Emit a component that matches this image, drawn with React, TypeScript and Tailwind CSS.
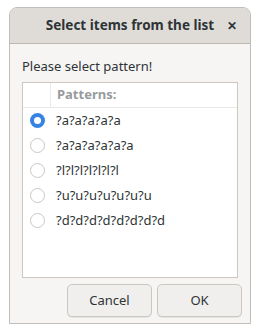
import React, { useState } from "react";

const patterns = ["?a?a?a?a?a", "?a?a?a?a?a?a", "?l?l?l?l?l?l?l", "?u?u?u?u?u?u?u", "?d?d?d?d?d?d?d?d"];

function Radio({ checked }: { checked: boolean }) {
  if (checked) {
    return (
      <span className="w-[15px] h-[15px] rounded-full bg-[#3584e4] flex items-center justify-center">
        <span className="w-[7px] h-[7px] rounded-full bg-white" />
      </span>
    );
  }
  return <span className="w-[15px] h-[15px] rounded-full border border-[#cdc7c2] bg-white" />;
}

export default function App() {
  const [selected, setSelected] = useState(0);

  return (
    <main className="w-[260px] h-[335px] bg-white pt-[7px] pl-[9px] font-['Noto_Sans',sans-serif] text-[#2e3436]">
      <div className="w-[242px] h-[317px] flex flex-col rounded-t-[8px] border border-[#c0bdba] bg-[#f6f5f4] overflow-hidden">
        {/* Title bar */}
        <div className="h-[36px] shrink-0 flex items-center bg-[#dfdcd8] border-b border-[#bfb8b1]">
          <div className="w-[30px]" />
          <div className="flex-1 text-center whitespace-nowrap text-[13.5px] font-bold text-[#2e3436]">
            Select items from the list
          </div>
          <div className="w-[30px] pr-[6px] text-center text-[12px] font-bold">✕</div>
        </div>

        {/* Body */}
        <div className="flex-1 flex flex-col px-[12px] pt-[13px] pb-[4px]">
          <div className="text-[13px] leading-[18px] mb-[7px]">Please select pattern!</div>
          <div className="h-[196px] bg-white border border-[#cdc7c2] flex flex-col">
            <div className="h-[25px] flex border-b border-[#ebe9e7]">
              <div className="w-[28px] border-r border-[#ebe9e7]" />
              <div className="pl-[6px] flex items-center text-[13px] font-bold text-[#979a9b]">Patterns:</div>
            </div>
            {patterns.map((p, i) => (
              <div key={p} className="h-[25px] flex items-center cursor-pointer" onClick={() => setSelected(i)}>
                <div className="w-[28px] flex justify-center pl-[1px]">
                  <Radio checked={selected === i} />
                </div>
                <div className="pl-[5px] text-[13px]">{p}</div>
              </div>
            ))}
          </div>
          <div className="flex justify-end gap-[5px] mt-[6px] -mr-[4px]">
            <button className="w-[85px] h-[33px] rounded-[5px] border border-[#cdc7c2] bg-[#f0efed] text-[13px] text-[#2e3436] shadow-[0_1px_0_rgba(0,0,0,0.07)]">
              Cancel
            </button>
            <button className="w-[85px] h-[33px] rounded-[5px] border border-[#cdc7c2] bg-[#f0efed] text-[13px] text-[#2e3436] shadow-[0_1px_0_rgba(0,0,0,0.07)]">
              OK
            </button>
          </div>
        </div>
      </div>
    </main>
  );
}
